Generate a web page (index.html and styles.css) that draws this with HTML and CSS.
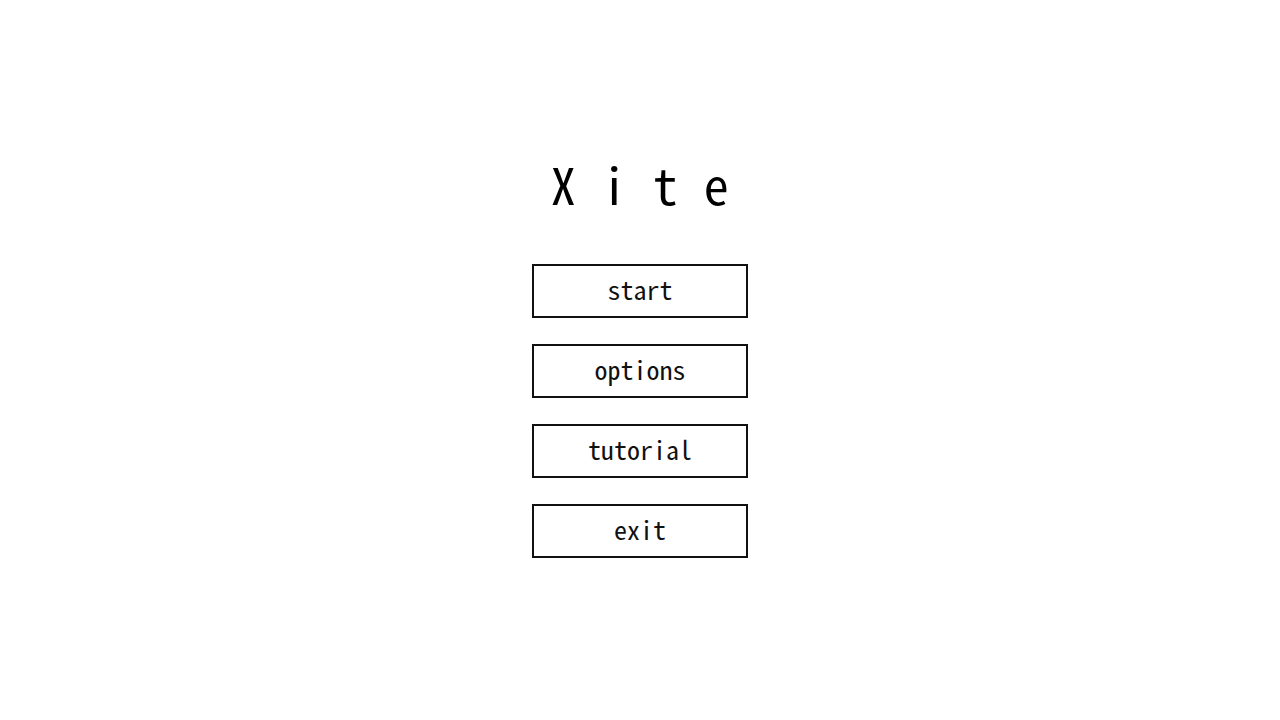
FILE: index.html
```html
<!DOCTYPE html>
<html lang="ja">
<head>
<meta charset="utf-8">
<title>Xite</title>
<link rel="stylesheet" href="styles.css">
</head>
<body>
<main class="menu">
  <h1 class="title">X i t e</h1>
  <nav class="buttons">
    <button class="btn">start</button>
    <button class="btn">options</button>
    <button class="btn">tutorial</button>
    <button class="btn">exit</button>
  </nav>
</main>
</body>
</html>
```
FILE: styles.css
```css
html, body {
  margin: 0;
  padding: 0;
  background: #fff;
}
body {
  width: 1280px;
  height: 720px;
  overflow: hidden;
  font-family: "Noto Sans Mono CJK JP", "Noto Sans CJK JP", "Liberation Mono", monospace;
  color: #000;
}
.menu {
  display: flex;
  flex-direction: column;
  align-items: center;
  padding-top: 153px;
}
.title {
  margin: 0;
  font-size: 50px;
  font-weight: 400;
  line-height: 60px;
  white-space: pre;
  height: 60px;
  letter-spacing: 0.5px;
}
.buttons {
  display: flex;
  flex-direction: column;
  gap: 26px;
  margin-top: 51px;
}
.btn {
  width: 216px;
  height: 54px;
  box-sizing: border-box;
  border: 2px solid #111;
  background: #fff;
  font-family: inherit;
  font-size: 26px;
  color: #111;
  padding: 0 0 4px 0;
  line-height: 1;
}
```
